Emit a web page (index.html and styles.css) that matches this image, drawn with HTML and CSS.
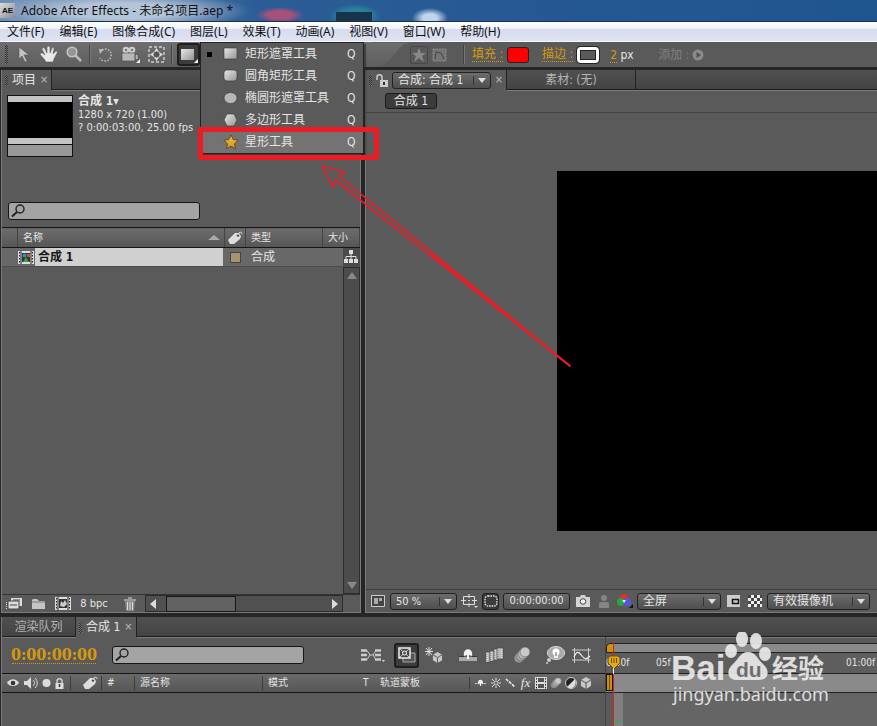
FILE: index.html
```html
<!DOCTYPE html>
<html lang="zh-CN">
<head>
<meta charset="utf-8">
<title>Adobe After Effects - 未命名项目.aep *</title>
<link rel="stylesheet" href="styles.css">
</head>
<body>
<svg class="defs" width="0" height="0" aria-hidden="true">
  <defs>
    <linearGradient id="metal" x1="0" y1="0" x2="1" y2="1"><stop offset="0" stop-color="#e8e8e8"/><stop offset="1" stop-color="#949494"/></linearGradient>
    <linearGradient id="gold" x1="0" y1="0" x2="0" y2="1"><stop offset="0" stop-color="#f0c040"/><stop offset="1" stop-color="#c8962c"/></linearGradient>
    <linearGradient id="curve" x1="0" y1="0" x2="0" y2="1"><stop offset="0" stop-color="#6e6e6e"/><stop offset="1" stop-color="#5f5f5f"/></linearGradient>
    <symbol id="tag" viewBox="0 0 16 14"><path d="M1 9 8 2h4l2 3-1 3-6 5H3z" fill="#ddd"/><circle cx="11" cy="4.500" r="1.200" fill="#444"/><path d="M11 4C11 1 15 0 15 3" fill="none" stroke="#ddd"/></symbol>
    <symbol id="film" viewBox="0 0 16 13"><path d="M0 0h16v13H0z" fill="#ddd"/><path d="M3 0v13M13 0v13" stroke="#222"/><path d="M1.500 1v12M14.500 1v12" stroke="#222" stroke-dasharray="1.500 1.500"/><path d="M4 2h8v9H4z" fill="#333"/></symbol>
    <symbol id="lens" viewBox="0 0 14 14"><circle cx="9" cy="5" r="4" fill="none" stroke="#222" stroke-width="1.400"/><path d="M6 8 1 12.500" stroke="#222" stroke-width="2"/></symbol>
    <symbol id="cube" viewBox="0 0 12 12"><path d="M6 0 11 3v6L6 12 1 9V3z" fill="#c8c8c8"/><path d="M1 3l5 3 5-3M6 6v6" fill="none" stroke="#555"/></symbol>
    <symbol id="blurballs" viewBox="0 0 18 18"><g stroke="#555" stroke-width=".6"><circle cx="6" cy="12" r="5" fill="#999"/><circle cx="8" cy="10" r="5" fill="#aaa"/><circle cx="10" cy="8" r="5" fill="#bbb"/><circle cx="12" cy="6" r="5" fill="#c8c8c8"/></g></symbol>
    <symbol id="shy" viewBox="0 0 18 12"><path d="M0 8h18v4H0z" fill="#aaa"/><path d="M0 7.500h5M13 7.500h5" stroke="#333"/><path d="M5 7c-2-9 10-9 8 0l-3-1v4H8V6z" fill="#f2f2f2"/></symbol>
  </defs>
</svg>

<header class="titlebar"><span class="app-logo">AE</span><h1>Adobe After Effects - 未命名项目.aep *</h1></header>
<nav class="menubar" aria-label="菜单">
  <button>文件(F)</button><button>编辑(E)</button><button>图像合成(C)</button><button>图层(L)</button><button>效果(T)</button><button>动画(A)</button><button>视图(V)</button><button>窗口(W)</button><button>帮助(H)</button>
</nav>

<section class="toolbar" aria-label="工具">
  <div class="tools">
    <i class="grip"></i>
    <button aria-label="选择"><svg width="12" height="17" viewBox="0 0 12 17"><path d="M1 1v12l3-3 3 6 2-1-3-6h5z" fill="#c4c4c4" stroke="#555" stroke-width=".6"/></svg></button>
    <button aria-label="手形"><svg width="18" height="17" viewBox="0 0 18 17"><path d="M6 16C4 12 1 10 0 8c1-2 3-1 5 1L2 3c1-2 2-1 3 0l2 4V1c1-1 2-1 3 0v6l2-5c1-1 2-1 2 1l-1 5 3-3c1 0 2 1 1 2l-3 6-1 3z" fill="#e8e8e8" stroke="#555" stroke-width=".5"/></svg></button>
    <button aria-label="缩放"><svg width="17" height="17" viewBox="0 0 17 17"><path d="m9 9 6 6" stroke="#bbb" stroke-width="2.500"/><circle cx="6" cy="6" r="4.800" fill="#969696" stroke="#c4c4c4" stroke-width="1.600"/></svg></button>
    <i class="sep"></i>
    <button aria-label="旋转"><svg width="16" height="16" viewBox="0 0 16 16"><path d="M4 3a6 6 0 1 1-2 8" fill="none" stroke="#bbb" stroke-width="1.600" stroke-dasharray="1.500 1.500"/><path d="M1 2h5L2 7z" fill="#bbb"/></svg></button>
    <button aria-label="摄像机"><svg width="20" height="17" viewBox="0 0 20 17"><circle cx="5" cy="4" r="3.300" fill="#ccc"/><circle cx="11" cy="4" r="3.300" fill="#ccc"/><path d="M1 7h13v8H1zM14 9l3-1v6l-3-1z" fill="#b8b8b8" stroke="#444" stroke-width=".6"/><circle cx="5" cy="4" r="1" fill="#555"/><circle cx="11" cy="4" r="1" fill="#555"/><path d="M19 13v4h-4z" fill="#eee"/></svg></button>
    <button aria-label="轴心点"><svg width="17" height="17" viewBox="0 0 17 17"><path d="M1 1h15v15H1z" fill="none" stroke="#d0d0d0" stroke-width="1.400" stroke-dasharray="3 2"/><circle cx="8.500" cy="8.500" r="3.500" fill="#555" stroke="#ccc"/><path d="m8.500 2 2 3h-4zm0 13 2-3h-4zM2 8.500l3-2v4zm13 0-3-2v4z" fill="#ddd"/></svg></button>
    <i class="sep"></i>
    <button class="pressed" aria-label="矩形遮罩工具"><svg width="18" height="17" viewBox="0 0 18 17"><path d="M1 3h13v11H1z" fill="url(#metal)"/><path d="M18 13v4h-4z" fill="#fff"/></svg></button>
  </div>
  <svg class="tool-curve" viewBox="0 0 40 25" aria-hidden="true"><path d="M0 0h40C24 1 24 24 4 25H0z" fill="url(#curve)"/></svg>
  <div class="options">
    <button class="star-mode" aria-label="形状"><svg width="14" height="14" viewBox="0 0 14 14"><path d="m7 0 2 5h5l-4 3 2 6-5-4-5 4 2-6-4-3h5z" fill="#888"/></svg></button>
    <button aria-label="遮罩"><svg width="15" height="14" viewBox="0 0 15 14"><path d="M1 1h13v12H1z" fill="#747474" stroke="#8a8a8a" stroke-dasharray="2 1"/><path d="m3 11 1-7 5 1 3 6" fill="none" stroke="#444"/></svg></button>
    <i class="sep"></i>
    <a href="#fill" class="hot">填充 :</a><button class="swatch fill" aria-label="填充颜色"></button>
    <a href="#stroke" class="hot">描边 :</a><button class="swatch stroke" aria-label="描边颜色"></button>
    <span class="px"><a href="#width" class="hot">2</a> px</span>
    <button class="add" disabled>添加 :<svg width="12" height="12" viewBox="0 0 12 12"><circle cx="6" cy="6" r="5.500" fill="#8a8a8a"/><path d="M4.500 3v6L9 6z" fill="#505050"/></svg></button>
  </div>
  <div class="popup" role="menu">
    <button role="menuitem"><i class="bullet"></i><svg width="16" height="14" viewBox="0 0 16 14"><path d="M1 1h13v11H1z" fill="url(#metal)" stroke="#333" stroke-width=".6"/></svg><span>矩形遮罩工具</span><kbd>Q</kbd></button>
    <button role="menuitem"><i></i><svg width="16" height="14" viewBox="0 0 16 14"><rect x="1" y="1" width="13" height="11" rx="3" fill="url(#metal)" stroke="#333" stroke-width=".6"/></svg><span>圆角矩形工具</span><kbd>Q</kbd></button>
    <button role="menuitem"><i></i><svg width="16" height="14" viewBox="0 0 16 14"><ellipse cx="7.500" cy="7" rx="6.500" ry="5.500" fill="#b8b8b8" stroke="#333" stroke-width=".6"/></svg><span>椭圆形遮罩工具</span><kbd>Q</kbd></button>
    <button role="menuitem"><i></i><svg width="16" height="14" viewBox="0 0 16 14"><path d="M4 1h7l3 6-3 6H4L1 7z" fill="url(#metal)" stroke="#333" stroke-width=".6"/></svg><span>多边形工具</span><kbd>Q</kbd></button>
    <button role="menuitem" class="active"><i></i><svg width="16" height="16" viewBox="0 0 16 16"><path d="m8 1 2.200 4.500 5 .7-3.700 3.500 1 5L8 12.300 3.500 14.700l1-5L.8 6.200l5-.7z" fill="url(#gold)" stroke="#5a3d08" stroke-width=".8"/></svg><span>星形工具</span><kbd>Q</kbd></button>
  </div>
  <div class="mark-box"></div>
  <svg class="mark-arrow" width="270" height="220" viewBox="310 150 270 220" aria-hidden="true"><path d="M570 366 335 180l-2 7-11-21 23 6-6 4z" fill="none" stroke="#ed1c24" stroke-width="1.600" stroke-linejoin="round" stroke-linecap="round"/><path d="M570 366 430 254" stroke="#ed1c24" stroke-width="2"/></svg>
</section>

<main>
  <section class="panel project">
    <div class="tabs"><span class="tab on"><i class="grip"></i>项目<b>×</b></span><span class="tab-fill"></span></div>
    <div class="comp-info">
      <div class="thumb"></div>
      <p><strong>合成 1▾</strong><br>1280 x 720 (1.00)<br>? 0:00:03:00, 25.00 fps</p>
    </div>
    <label class="search"><svg width="14" height="14"><use href="#lens"/></svg><input type="text" aria-label="搜索项目"></label>
    <table>
      <colgroup><col class="c-gut"><col class="c-name"><col class="c-tag"><col class="c-type"><col><col class="c-flow"></colgroup>
      <thead><tr><th></th><th class="sorted">名称<i></i></th><th class="center"><svg width="16" height="14"><use href="#tag"/></svg></th><th>类型</th><th colspan="2">大小</th></tr></thead>
      <tbody><tr><td></td>
        <td class="name"><div><svg width="16" height="13" viewBox="0 0 16 13"><use href="#film"/><circle cx="6.500" cy="4.500" r="2" fill="#2a8fd0"/><path d="M9 3h3v3H9z" fill="#d0502a"/><path d="m8 6 3 5H5z" fill="#3aa040"/></svg><span>合成 1</span></div></td>
        <td class="center"><i class="label"></i></td><td>合成</td><td></td>
        <td class="flow"><svg width="14" height="14" viewBox="0 0 14 14"><path d="M5 0h4v4H5zM0 9h4v4H0zM5 9h4v4H5zM10 9h4v4h-4z" fill="#ddd"/><path d="M7 4v5M2 9V6.500h10V9" fill="none" stroke="#ddd"/></svg></td></tr></tbody>
    </table>
    <div class="list-space"><div class="vscroll"><i class="up"></i><i class="down"></i></div></div>
    <div class="project-foot">
      <button aria-label="解释素材"><svg width="17" height="13" viewBox="0 0 17 13"><path d="M5 1h11v8H5z" fill="#ddd"/><path d="M2 4h11v8H2z" fill="#ddd" stroke="#444"/><path d="M.500 5v8" stroke="#ddd" stroke-dasharray="1 1"/><path d="M4 8h7M7 3h7" stroke="#444"/></svg></button>
      <button aria-label="文件夹"><svg width="14" height="12" viewBox="0 0 14 12"><path d="M0 2 1 1h4l2 2h6v8H0z" fill="#c4c4c4"/><path d="M0 4h13" stroke="#777"/></svg></button>
      <button aria-label="新建合成"><svg width="16" height="13" viewBox="0 0 16 13"><use href="#film"/><path d="m6 4 2 2 2-3 2 4-3 3-4-1z" fill="#ccc"/></svg></button>
      <button class="bpc">8 bpc</button>
      <button aria-label="删除"><svg width="12" height="14" viewBox="0 0 12 14"><path d="M1 4h10l-1 10H2z" fill="#888"/><path d="M0 3h12M4 1h4M3.500 5v8M6 5v8M8.500 5v8" stroke="#ddd"/></svg></button>
      <div class="hscroll"><i class="left"></i><i class="bar"></i><i class="right"></i></div>
    </div>
  </section>

  <section class="panel viewer">
    <div class="tabs"><span class="tab on view-tab"><i class="grip"></i><svg width="12" height="13" viewBox="0 0 12 13"><path d="M1 6V3c0-3 5-3 5 0v3" fill="none" stroke="#ccc" stroke-width="1.500"/><path d="M4 6h8v7H4z" fill="#ccc"/><path d="M8 8v3" stroke="#333" stroke-width="2"/></svg><span class="drop"><select aria-label="合成"><option>合成: 合成 1</option></select></span><b>×</b></span><span class="tab off footage">素材: (无)</span><span class="tab-fill"></span></div>
    <div class="crumbs"><button>合成 1</button></div>
    <div class="canvas"><div class="frame"></div></div>
    <div class="view-foot">
      <button aria-label="总在最前"><svg width="14" height="12" viewBox="0 0 14 12"><path d="M.5.5h13v11H.5z" fill="#444" stroke="#ccc"/><path d="M3 3h4v6H3zM8 3h3v3H8z" fill="#aaa"/></svg></button>
      <span class="drop zoom"><select aria-label="缩放比例"><option>50 %</option></select></span>
      <button aria-label="网格"><svg width="17" height="14" viewBox="0 0 17 14"><path d="M2.500 2.500h11v8h-11z" fill="none" stroke="#ddd"/><path d="M8 0v4M8 9v4M0 6.500h5M11 6.500h5M7 6.500h2" stroke="#ddd"/><path d="M13 12h4l-2 2z" fill="#ddd"/></svg></button>
      <button class="pressed" aria-label="区域"><svg width="14" height="12" viewBox="0 0 14 12"><rect x="1" y="1" width="12" height="10" rx="3" fill="none" stroke="#eee" stroke-width="1.300" stroke-dasharray="1.500 1"/></svg></button>
      <button class="time">0:00:00:00</button>
      <button aria-label="快照"><svg width="14" height="12" viewBox="0 0 14 12"><path d="M0 2h4l1-2h4l1 2h4v10H0z" fill="#d4d4d4"/><circle cx="7" cy="6.500" r="2.800" fill="#eee" stroke="#444"/></svg></button>
      <button aria-label="显示快照"><svg width="12" height="13" viewBox="0 0 12 13"><circle cx="6" cy="3" r="3" fill="#858585"/><path d="M1 13V8l2-1h6l2 1v5z" fill="#858585"/></svg></button>
      <button aria-label="通道"><svg width="16" height="14" viewBox="0 0 16 14"><circle cx="7" cy="4" r="4" fill="#e03028"/><circle cx="4" cy="8" r="4" fill="#28a838"/><circle cx="10" cy="8" r="4" fill="#5058e0"/><path d="M5 6h4l-2 3z" fill="#eee"/><path d="M16 10v4h-4z" fill="#111"/></svg></button>
      <span class="drop res"><select aria-label="分辨率"><option>全屏</option></select></span>
      <button aria-label="目标区域"><svg width="14" height="12" viewBox="0 0 14 12"><path d="M0 0h13v12H0z" fill="#ccc"/><path d="M5.500 4.500h6v4h-6z" fill="#ccc" stroke="#111" stroke-width="1.500"/></svg></button>
      <button aria-label="透明网格"><i class="checker"></i></button>
      <span class="drop cam"><select aria-label="摄像机视图"><option>有效摄像机</option></select></span>
    </div>
  </section>
</main>

<section class="panel timeline">
  <div class="tabs"><span class="tab off queue">渲染队列</span><span class="tab on"><i class="grip"></i>合成 1<b>×</b></span><span class="tab-fill"></span></div>
  <div class="tl-body">
    <div class="tl-left">
      <div class="tl-controls">
        <button class="timecode">0:00:00:00</button>
        <label class="search"><svg width="14" height="14"><use href="#lens"/></svg><input type="text" aria-label="搜索图层"></label>
        <div class="switches">
          <button aria-label="流程图"><svg width="24" height="14" viewBox="0 0 24 14"><path d="M0 2.500h6M0 7h6M0 11.500h6M14 2.500h6M14 7h6M14 11.500h6" stroke="#ccc" stroke-width="2.500"/><path d="M6 2.500 9 7h3l3-4.500M6 11.500 9 7M12 7l3 4.500" fill="none" stroke="#ccc"/><path d="M21 12h3l-1.500 2z" fill="#ddd"/></svg></button>
          <button class="pressed" aria-label="实时更新"><svg width="18" height="17" viewBox="0 0 18 17"><path d="M7 6h10v9H5v-4" fill="#555" stroke="#aaa"/><path d="M1 1h11v10H1z" fill="#444" stroke="#eee" stroke-width="1.500"/><path d="m2 2 9 8m0-8-9 8" stroke="#ccc"/><circle cx="6.500" cy="6" r="2" fill="#555" stroke="#eee"/></svg></button>
          <button aria-label="草稿3D"><svg width="18" height="17" viewBox="0 0 18 17"><path d="M4 0v9M0 4.500h8M1 1l6 7M7 1 1 8" stroke="#ddd"/><use href="#cube" x="7" y="4" width="11" height="13"/></svg></button>
          <button aria-label="隐藏图层"><svg width="18" height="14"><use href="#shy"/></svg></button>
          <button aria-label="帧混合"><svg width="18" height="16" viewBox="0 0 18 16"><g fill="#bbb" stroke="#444" stroke-width=".6"><path d="M0 5h4v10H0zM4 4h4v10H4zM8 2h4v11H8zM11 1h6v11h-6z"/></g><path d="M12 2v10M16 2v10M5 5v9M1 6v9M9 3v9" stroke="#eee" stroke-dasharray="1 1"/></svg></button>
          <button aria-label="动态模糊"><svg width="18" height="18"><use href="#blurballs"/></svg></button>
          <button class="far" aria-label="头脑风暴"><svg width="20" height="18" viewBox="0 0 20 18"><ellipse cx="11" cy="7" rx="8.500" ry="6.500" fill="#aaa" stroke="#ddd"/><circle cx="11" cy="6" r="3.500" fill="#fff"/><path d="M9 8h4v4H9z" fill="#eee"/><path d="M11 6v4" stroke="#666"/><circle cx="4" cy="14" r="2" fill="#ccc"/><circle cx="2" cy="17" r="1" fill="#ccc"/></svg></button>
          <button aria-label="曲线编辑器"><svg width="19" height="15" viewBox="0 0 19 15"><path d="M0 2h19M0 12h19M2.500 0v15M16.500 0v15" stroke="#ccc"/><path d="M2 9c3-7 5-5 8-1s5 3 8 0" fill="none" stroke="#eee" stroke-width="1.200"/></svg></button>
        </div>
      </div>
      <div class="tl-head">
        <span class="av">
          <svg width="13" height="10" viewBox="0 0 13 10"><path d="M0 5c3-5 9-5 12 0-3 4-9 4-12 0z" fill="#ddd"/><circle cx="6" cy="5" r="2.300" fill="#333"/></svg>
          <svg width="14" height="12" viewBox="0 0 14 12"><path d="M0 4h3l4-4v12L3 8H0z" fill="#ddd"/><path d="M9 3c2 2 2 4 0 6M11 1c3 3 3 7 0 10" fill="none" stroke="#ddd"/></svg>
          <svg width="9" height="10" viewBox="0 0 9 10"><circle cx="4.500" cy="5" r="4" fill="#ddd"/></svg>
          <svg width="9" height="11" viewBox="0 0 9 11"><path d="M2 5V3c0-3 5-3 5 0v2" fill="none" stroke="#ccc" stroke-width="1.500"/><path d="M.5 5h8v6h-8z" fill="#ddd"/><path d="M4.500 6v3" stroke="#333" stroke-width="1.500"/></svg>
        </span>
        <span class="center"><svg width="16" height="14"><use href="#tag"/></svg></span>
        <span>#</span><span>源名称</span><span>模式</span><span class="bare">T</span><span class="bare">轨道蒙板</span>
        <span class="layer-sw">
          <svg width="11" height="8" viewBox="0 0 18 12"><path d="M0 7h4M14 7h4" stroke="#ddd" stroke-width="1.500"/><path d="M5 8c-2-10 10-10 8 0l-3-1v4H8V7z" fill="#f2f2f2"/></svg>
          <svg width="10" height="10" viewBox="0 0 10 10"><circle cx="5" cy="5" r="2" fill="none" stroke="#ddd"/><path d="M5 0v2M5 8v2M0 5h2M8 5h2M1 1l2 2M7 7l2 2M9 1 7 3M3 7 1 9" stroke="#ddd"/></svg>
          <svg width="11" height="10" viewBox="0 0 11 10"><path d="m1 1 9 8" stroke="#eee" stroke-width="1.600" stroke-dasharray="3 1"/></svg>
          <em>fx</em>
          <svg width="12" height="12" viewBox="0 0 12 12"><path d="M0 0h12v12H0z" fill="#ddd"/><path d="M3 1h6v4H3zM3 7h6v4H3z" fill="#555"/><path d="M1.500 1v11M10.500 1v11" stroke="#222" stroke-dasharray="1.500 1.500"/></svg>
          <svg width="12" height="12"><use href="#blurballs"/></svg>
          <svg width="12" height="12" viewBox="0 0 12 12"><circle cx="6" cy="6" r="5.500" fill="#222" stroke="#ccc"/><path d="M10 2 2 10c5 4 11-2 8-8z" fill="#ddd"/></svg>
          <svg width="12" height="12"><use href="#cube"/></svg>
        </span>
      </div>
    </div>
    <div class="tl-right">
      <div class="nav-bar"><i></i></div>
      <div class="ruler"><span>0:00f</span><span>05f</span><span>01:00f</span></div>
      <div class="work-bar"><i></i></div>
      <div class="tracks"></div>
      <svg class="playhead" width="14" height="84" viewBox="0 0 14 84" aria-hidden="true"><path d="M6.500 0v84" stroke="#e02020"/><path d="M8 79h9" stroke="#18b828"/><path d="M1 16l2-2h8l2 2v5l-6 6-6-6z" fill="#e4aa10" stroke="#6a4c08"/><path d="M4.500 16v5M7 16v5M9.500 16v5" stroke="#6a4c08"/><path d="M6.500 26v6" stroke="#eee"/></svg>
      <svg class="watermark" width="160" height="78" viewBox="0 0 160 78" role="img" aria-label="Baidu 经验">
        <g fill="#ececec">
          <text x="1" y="48" class="wm-big">Bai</text>
          <ellipse cx="72" cy="7" rx="6" ry="8"/><ellipse cx="86" cy="9" rx="6" ry="8"/><ellipse cx="61" cy="19" rx="6" ry="7"/><ellipse cx="95" cy="22" rx="6" ry="7"/>
          <path d="M78 20c8 0 10 8 15 12 8 7 5 16-4 16H67c-9 0-12-9-4-16 5-4 7-12 15-12z"/>
          <text x="102" y="46" class="wm-cjk">经验</text>
          <text x="3" y="69" class="wm-url">jingyan.baidu.com</text>
        </g>
        <text x="66" y="45" class="wm-du">du</text>
      </svg>
    </div>
  </div>
</section>
</body>
</html>
```
FILE: styles.css
```css
* { box-sizing: border-box; }

:root {
  --panel: #5a5a5a;
  --edge: #222;
  --light: #7a7a7a;
  --text: #e4e4e4;
  --orange: #d49a0c;
}

body {
  margin: 0;
  min-height: 100vh;
  display: flex;
  flex-direction: column;
  background: #262626;
  color: var(--text);
  font: 12px/16px "DejaVu Sans Condensed", "Noto Sans CJK SC", sans-serif;
  overflow: hidden;
}

button, input, select {
  font: inherit;
  color: inherit;
  background: none;
  border: 0;
  padding: 0;
  margin: 0;
}
button { display: flex; align-items: center; justify-content: center; }
svg { display: block; flex: none; }
.defs { position: absolute; }

/* window chrome */
.titlebar {
  height: 22px;
  display: flex;
  align-items: center;
  gap: 6px;
  color: #111;
  border-bottom: 1px solid #16304e;
  background:
    radial-gradient(ellipse 130px 20px at 120px 11px, #b4c4d8 40%, transparent),
    radial-gradient(ellipse 24px 8px at 280px 15px, #a8507c 50%, transparent),
    linear-gradient(#17344a, #17344a) 336px 12px / 36px 10px no-repeat,
    radial-gradient(ellipse 26px 12px at 355px 16px, #28809c 60%, transparent),
    radial-gradient(ellipse 18px 10px at 430px 18px, #c0d4ea 40%, transparent),
    linear-gradient(90deg, #6f8fb4, #2b5c96 30%, #1f558f);
}
.titlebar h1 { margin: 0; font: 12px/20px "Noto Sans", "Noto Sans CJK SC", sans-serif; }
.app-logo {
  width: 15px;
  height: 15px;
  background: linear-gradient(135deg, #ddd, #889);
  font: bold 8px/15px "Liberation Sans", sans-serif;
  text-align: center;
}
.menubar {
  height: 20px;
  display: flex;
  gap: 15px;
  padding-left: 7px;
  color: #111;
  font-family: "Noto Sans", "Noto Sans CJK SC", sans-serif;
  background: linear-gradient(#fff, #f0f2fa 35%, #d6dbee 38%, #dfe4f4);
  border-bottom: 1px solid #f8f8f8;
}

/* tool bar */
.toolbar {
  position: relative;
  height: 25px;
  display: flex;
  background: var(--panel);
}
.tools {
  width: 372px;
  display: flex;
  align-items: center;
  gap: 1px;
  padding-left: 5px;
  background: linear-gradient(#6e6e6e, #5f5f5f);
}
.tools button { width: 24px; height: 23px; }
.tools .grip { margin-right: 3px; height: 19px; }
.grip {
  width: 3px;
  height: 11px;
  background: repeating-conic-gradient(#2c2c2c 0 25%, #747474 0 50%) 0 0 / 2px 2px;
}
.sep { width: 2px; height: 19px; margin: 0 2px; background: #444; border-right: 1px solid #777; }
.tools .pressed { width: 23px; margin-left: 1px; }
.pressed { background: #3c3c3c; border: 2px solid #1e1e1e; border-radius: 3px; }
.tool-curve { width: 38px; height: 25px; }
.options { display: flex; align-items: center; gap: 4px; }
.options .sep { margin: 0 3px 0 12px; }
.star-mode { width: 18px; height: 18px; border: 1px solid #484848; background: #5a5a5a; border-radius: 2px; }
.hot { color: var(--orange); text-decoration: none; border-bottom: 1px dotted var(--orange); line-height: 14px; }
.swatch { width: 22px; height: 16px; border-radius: 3px; border: 1px solid #222; }
.fill { background: #f00; margin-right: 9px; }
.stroke { border: 3px solid #fff; outline: 1px solid #222; box-shadow: inset 0 0 0 1px #222; margin-right: 7px; }
.px { width: 44px; }
.add { gap: 3px; color: #808080; }

/* tool menu */
.popup {
  position: absolute;
  z-index: 3;
  left: 200px;
  top: 0;
  width: 164px;
  background: var(--panel);
  border: 1px solid #222;
  box-shadow: 2px 2px 1px #2228;
}
.popup button {
  width: 100%;
  height: 22px;
  display: grid;
  grid-template-columns: 16px 22px 1fr 16px;
  padding-left: 6px;
  text-align: left;
}
.popup .active { background: #737373; }
.popup kbd { font: inherit; }
.bullet { width: 5px; height: 5px; background: #000; }
.mark-box {
  position: absolute;
  z-index: 4;
  left: 198px;
  top: 85px;
  width: 181px;
  height: 33px;
  border: 5px solid #ed1c24;
  border-radius: 2px;
}
.mark-arrow { position: absolute; z-index: 4; left: 310px; top: 108px; }

/* panels */
main { flex: 1; display: flex; gap: 4px; padding: 3px 0 4px 1px; }
.panel { display: flex; flex-direction: column; background: var(--panel); }
.project { width: 360px; border-right: 1px solid var(--light); border-left: 1px solid var(--light); }
.viewer { flex: 1; min-width: 0; border-left: 1px solid var(--light); }
.tabs { height: 20px; display: flex; flex: none; }
.tab { display: flex; align-items: center; gap: 4px; padding: 0 3px; border-right: 1px solid var(--edge); white-space: nowrap; }
.tab b { font-weight: normal; font-size: 11px; color: #bbb; }
.off, .tab-fill { background: linear-gradient(#505050, #444); border-bottom: 1px solid #1c1c1c; box-shadow: 0 1px var(--light); }
.off { justify-content: center; color: #b4b4b4; }
.tab-fill { flex: 1; }

.comp-info { display: flex; gap: 5px; padding: 5px 5px 0; height: 112px; }
.comp-info p { margin: 0; font-size: 11px; line-height: 13px; white-space: nowrap; }
.comp-info strong { font-size: 12px; }
.thumb {
  width: 66px;
  height: 62px;
  border: 1px solid #111;
  background: linear-gradient(#c4c4c4 6px, #000 6px 42px, #c4c4c4 42px 48px, #111 48px 49px, #999 49px);
}
.search {
  width: 192px;
  height: 18px;
  display: flex;
  align-items: center;
  padding-left: 2px;
  background: #a4a4a4;
  border: 1px solid #161616;
  border-radius: 3px;
}
.search input { flex: 1; min-width: 0; outline: 0; color: #111; }
.project .search { margin: 0 0 7px 6px; }

table { width: 100%; table-layout: fixed; border-collapse: collapse; }
.c-gut { width: 16px; }
.c-name { width: 207px; }
.c-tag { width: 21px; }
.c-type { width: 77px; }
.c-flow { width: 17px; }
th {
  height: 20px;
  padding: 0 5px;
  text-align: left;
  font-size: 10px;
  font-weight: normal;
  line-height: 12px;
  background: linear-gradient(#6c6c6c, #565656);
  border: solid #161616;
  border-width: 1px 0;
  box-shadow: inset -1px 0 #444;
}
.sorted i { float: right; margin-top: 3px; border: 6px solid transparent; border-top: 0; border-bottom: 5px solid #aaa; }
td { height: 18px; padding: 0 5px; line-height: 16px; background: #686868; border-bottom: 1px solid #4c4c4c; }
.center, td.center { padding: 0 2px; }
td.name { padding: 0; }
.name div { display: flex; align-items: center; gap: 1px; height: 18px; }
.name span { flex: 1; padding-left: 3px; line-height: 18px; margin-right: 2px; background: #d0d0d0; color: #181818; font-weight: bold; }
.label { display: block; width: 11px; height: 11px; margin-left: 3px; background: #a8936f; border: 1px solid #444; }
td.flow { padding: 0 1px; background: #4a4a4a; }
.list-space { flex: 1; display: flex; justify-content: flex-end; border-bottom: 1px solid #333; }
.vscroll {
  width: 17px;
  display: flex;
  flex-direction: column;
  justify-content: space-between;
  align-items: center;
  padding: 4px 0;
  background: #4c4c4c;
  border: 1px solid #2c2c2c;
}
.up { border: 5px solid transparent; border-top: 0; border-bottom: 7px solid #888; }
.down { border: 5px solid transparent; border-bottom: 0; border-top: 7px solid #888; }
.project-foot { display: flex; align-items: center; height: 18px; gap: 9px; padding-left: 4px; border-bottom: 1px solid var(--light); }
.project-foot .bpc { width: 28px; margin-right: 7px; font-size: 11px; white-space: nowrap; }
.hscroll { flex: 1; align-self: stretch; display: flex; align-items: center; gap: 10px; margin-right: 17px; padding: 0 4px; background: #505050; border: 1px solid #2c2c2c; }
.left { border: 5px solid transparent; border-left: 0; border-right: 6px solid #ddd; }
.right { border: 5px solid transparent; border-right: 0; border-left: 6px solid #ddd; margin-left: auto; }
.bar { width: 70px; height: 16px; background: #626262; border: 1px solid #181818; }

/* viewer */
.drop { position: relative; display: flex; height: 17px; background: linear-gradient(#6c6c6c, #4e4e4e); border: 1px solid #222; border-radius: 3px; }
.drop select { appearance: none; width: 100%; padding: 0 20px 0 5px; line-height: 15px; }
.drop::after { content: ""; position: absolute; right: 4px; top: 5px; border: 4px solid transparent; border-bottom: 0; border-top: 5px solid #ddd; pointer-events: none; }
.drop::before { content: ""; position: absolute; right: 16px; top: 3px; bottom: 3px; border-left: 1px solid #333; }
.drop option { color: #111; }
.view-tab { width: 141px; gap: 4px; }
.view-tab .drop { flex: 1; }
.footage { width: 129px; }
.crumbs { height: 23px; padding: 3px 0 0 19px; border-bottom: 1px solid #444; }
.crumbs button { width: 52px; height: 16px; background: #3c3c3c; border: 1px solid #1c1c1c; border-radius: 3px; }
.canvas { flex: 1; padding: 58px 0 58px 191px; display: flex; }
.frame { flex: 1; background: #000; }
.view-foot { height: 24px; display: flex; align-items: center; gap: 4px; padding: 0 3px; border-top: 1px solid #3c3c3c; border-bottom: 1px solid var(--light); }
.view-foot > button:not(.time) { width: 17px; }
.view-foot > .pressed { width: 18px; height: 17px; border-width: 1px; }
.time { width: 67px; height: 17px; background: linear-gradient(#6c6c6c, #505050); border: 1px solid #222; border-radius: 3px; font-size: 11px; }
.zoom { width: 67px; font-size: 11px; }
.res { width: 84px; }
.cam { width: 103px; }
.checker { width: 14px; height: 12px; background: repeating-conic-gradient(#eee 0 25%, #444 0 50%) 0 0 / 6px 6px; }

/* timeline */
.timeline { height: 109px; margin-left: 1px; border-left: 1px solid var(--light); }
.queue { width: 74px; }
.tl-body { flex: 1; display: flex; }
.tl-left { width: 604px; border-right: 1px solid #444; }
.tl-controls { height: 36px; display: flex; align-items: center; padding-left: 10px; }
.timecode { height: 18px; width: 84px; margin-right: 16px; color: var(--orange); font: bold 16px/17px "DejaVu Serif Condensed", serif; border-bottom: 1px dotted var(--orange); }
.switches { flex: 1; display: flex; align-items: center; justify-content: flex-end; gap: 2px; padding-right: 11px; }
.switches button { width: 25px; height: 25px; }
.switches button:nth-child(1) { margin-right: 7px; }
.switches button:nth-child(3) { margin-right: 7px; }
.switches .far { margin-left: 6px; }
.tl-head {
  height: 20px;
  display: grid;
  grid-template-columns: 68px 31px 33px 128px 96px 17px 94px 1fr;
  align-items: center;
  font-size: 10px;
  background: linear-gradient(#6a6a6a, #565656);
  border: solid #161616;
  border-width: 1px 0;
}
.tl-head > span { padding-left: 5px; border-left: 1px solid #3c3c3c; line-height: 14px; }
.tl-head > .av { display: flex; align-items: center; gap: 4px; border: 0; }
.tl-head > .bare { border: 0; }
.tl-head > .center { padding-left: 11px; }
.tl-head > .layer-sw { display: grid; grid-template-columns: repeat(8, 15px); align-items: center; justify-items: center; padding-left: 3px; }
.layer-sw em { font: italic 13px/12px "Liberation Serif", serif; }
.tl-right { position: relative; flex: 1; min-width: 0; display: flex; flex-direction: column; padding-top: 6px; }
.nav-bar { height: 10px; background: #8a8a8a; border: 1px solid #222; border-right: 0; border-radius: 5px 0 0; }
.nav-bar i { display: block; width: 7px; height: 8px; background: #c8940c; border-radius: 4px 0 0; }
.ruler { height: 20px; display: grid; grid-template-columns: 50px 1fr 31px; align-items: center; font-size: 10px; background: #5e5e5e; }
.ruler span { white-space: nowrap; }
.work-bar { height: 20px; background: #8a8a8a; border: solid #222; border-width: 1px 0; }
.work-bar i { display: block; width: 7px; height: 17px; border: 1px solid #111; background: repeating-linear-gradient(90deg, #c8940c 0 2px, #6a4c08 2px 3px); }
.tracks { flex: 1; background: linear-gradient(90deg, #5a5a5a 8px, #808080 8px 17px, #656565 17px); }
.playhead { position: absolute; left: 1px; top: 5px; }
.watermark { position: absolute; left: 64px; top: -5px; opacity: .9; }
.wm-big { font: bold 35px "Liberation Sans", sans-serif; }
.wm-cjk { font: bold 26px "Noto Sans CJK SC", sans-serif; }
.wm-url { font: 18px "Noto Sans", sans-serif; }
.wm-du { font: bold 21px "Liberation Sans", sans-serif; fill: #707070; }
```
